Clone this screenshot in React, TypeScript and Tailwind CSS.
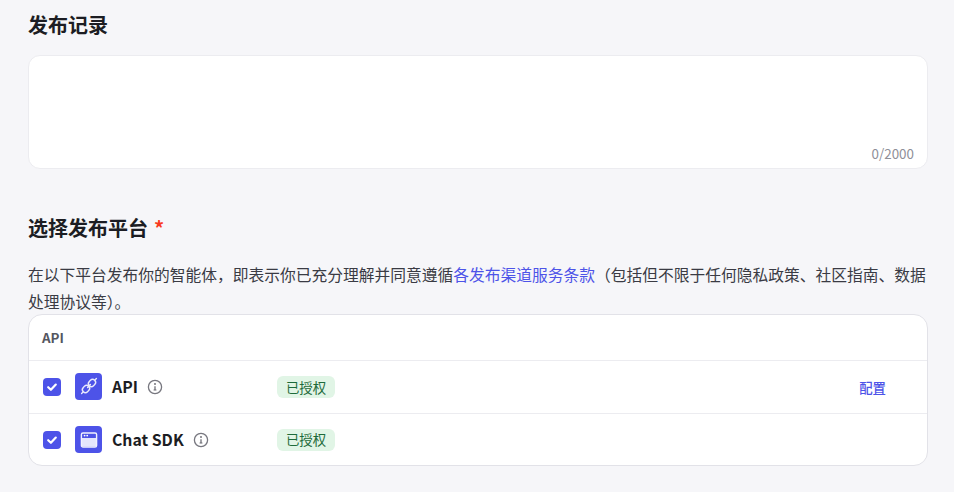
import React from "react";

const font = { fontFamily: '"Noto Sans CJK SC", "Noto Sans", sans-serif' };

function CheckBox() {
  return (
    <span className="flex h-[18px] w-[18px] items-center justify-center rounded-[4px] bg-[#4d53e8]">
      <svg width="12" height="12" viewBox="0 0 12 12" fill="none">
        <path d="M2.2 6.2 4.9 8.8 9.8 3.6" stroke="white" strokeWidth="2.2" strokeLinecap="round" strokeLinejoin="round" />
      </svg>
    </span>
  );
}

function InfoIcon() {
  return (
    <svg width="16" height="16" viewBox="0 0 16 16" fill="none">
      <circle cx="8" cy="8" r="6.6" stroke="#77777f" strokeWidth="1.3" />
      <path d="M8 7.2v3.6M6.6 11h2.8" stroke="#66666e" strokeWidth="1.2" />
      <circle cx="8" cy="5" r="0.9" fill="#66666e" />
    </svg>
  );
}

function ApiIcon() {
  return (
    <svg width="18" height="18" viewBox="0 0 18 18" fill="none" stroke="white" strokeWidth="1.4" strokeLinecap="round" opacity="0.88">
      <rect x="8.2" y="3" width="7.6" height="6" rx="3" transform="rotate(-45 12 6)" />
      <rect x="2.2" y="9" width="7.6" height="6" rx="3" transform="rotate(-45 6 12)" />
      <path d="M7.6 10.4 10.4 7.6M15 3l1.4-1.4M3 15l-1.4 1.4" />
    </svg>
  );
}

function WindowIcon() {
  return (
    <svg width="18" height="18" viewBox="0 0 18 18" fill="none">
      <rect x="1.4" y="2" width="15.2" height="14" rx="1.6" stroke="white" strokeWidth="1.4" opacity="0.92" />
      <rect x="2" y="7" width="14" height="8.4" fill="white" opacity="0.85" />
      <circle cx="4.6" cy="4.6" r="0.9" fill="white" />
      <circle cx="7.2" cy="4.6" r="0.9" fill="white" />
    </svg>
  );
}

function Badge() {
  return (
    <span className="flex h-[22px] w-[58px] items-center justify-center rounded-[6px] bg-[#e1f5e6] text-[13.4px] text-[#1e6b3a]">
      已授权
    </span>
  );
}

function PlatformRow({
  name,
  icon,
  action,
  h,
  iconClass,
}: {
  name: string;
  icon: React.ReactNode;
  action?: boolean;
  h: string;
  iconClass?: string;
}) {
  return (
    <div className={`flex items-center border-t border-[#ececf0] pl-[14px] pr-[41px] ${h}`}>
      <CheckBox />
      <span className={`ml-[14px] flex h-[27px] w-[27px] items-center justify-center rounded-[4px] bg-[#4d53e8] ${iconClass ?? ""}`}>{icon}</span>
      <div className="flex w-[175px] items-center gap-[9px] pl-[10px]">
        <span className="text-[15.8px] font-semibold text-[#1c1d23]">{name}</span>
        <InfoIcon />
      </div>
      <Badge />
      {action && <span className="ml-auto text-[13.4px] font-medium text-[#4d53e8]">配置</span>}
    </div>
  );
}

export default function App() {
  return (
    <div className="h-[492px] w-[954px] overflow-hidden bg-[#f6f6f9] px-[28px]" style={font}>
      <h2 className="pt-[11px] text-[20px] leading-[28px] font-semibold text-[#1c1d23]">发布记录</h2>
      <div className="mt-[16px] flex h-[114px] w-[900px] items-end justify-end rounded-[12px] border border-[#ececf0] bg-white pr-[13px] pb-[6px]">
        <span className="text-[13.4px] leading-[18px] text-[#8f8f98]">0/2000</span>
      </div>
      <h2 className="mt-[45px] flex gap-[6px] text-[20px] leading-[28px] font-semibold text-[#1c1d23]">
        选择发布平台<span className="text-[#f93920]">*</span>
      </h2>
      <p className="mt-[19px] w-[902px] text-[15.75px] leading-[27px] text-[#3a3b44]">
        在以下平台发布你的智能体，即表示你已充分理解并同意遵循<span className="text-[#4d53e8]">各发布渠道服务条款</span>（包括但不限于任何隐私政策、社区指南、数据处理协议等）。
      </p>
      <div className="mt-[-1px] w-[900px] rounded-[14px] border border-[#e2e2e8] bg-white">
        <div className="flex h-[45px] items-center pl-[13px] text-[13.4px] font-semibold text-[#55565f]">API</div>
        <PlatformRow name="API" icon={<ApiIcon />} action h="h-[53px]" iconClass="mb-[2px]" />
        <PlatformRow name="Chat SDK" icon={<WindowIcon />} h="h-[52px]" />
      </div>
    </div>
  );
}
